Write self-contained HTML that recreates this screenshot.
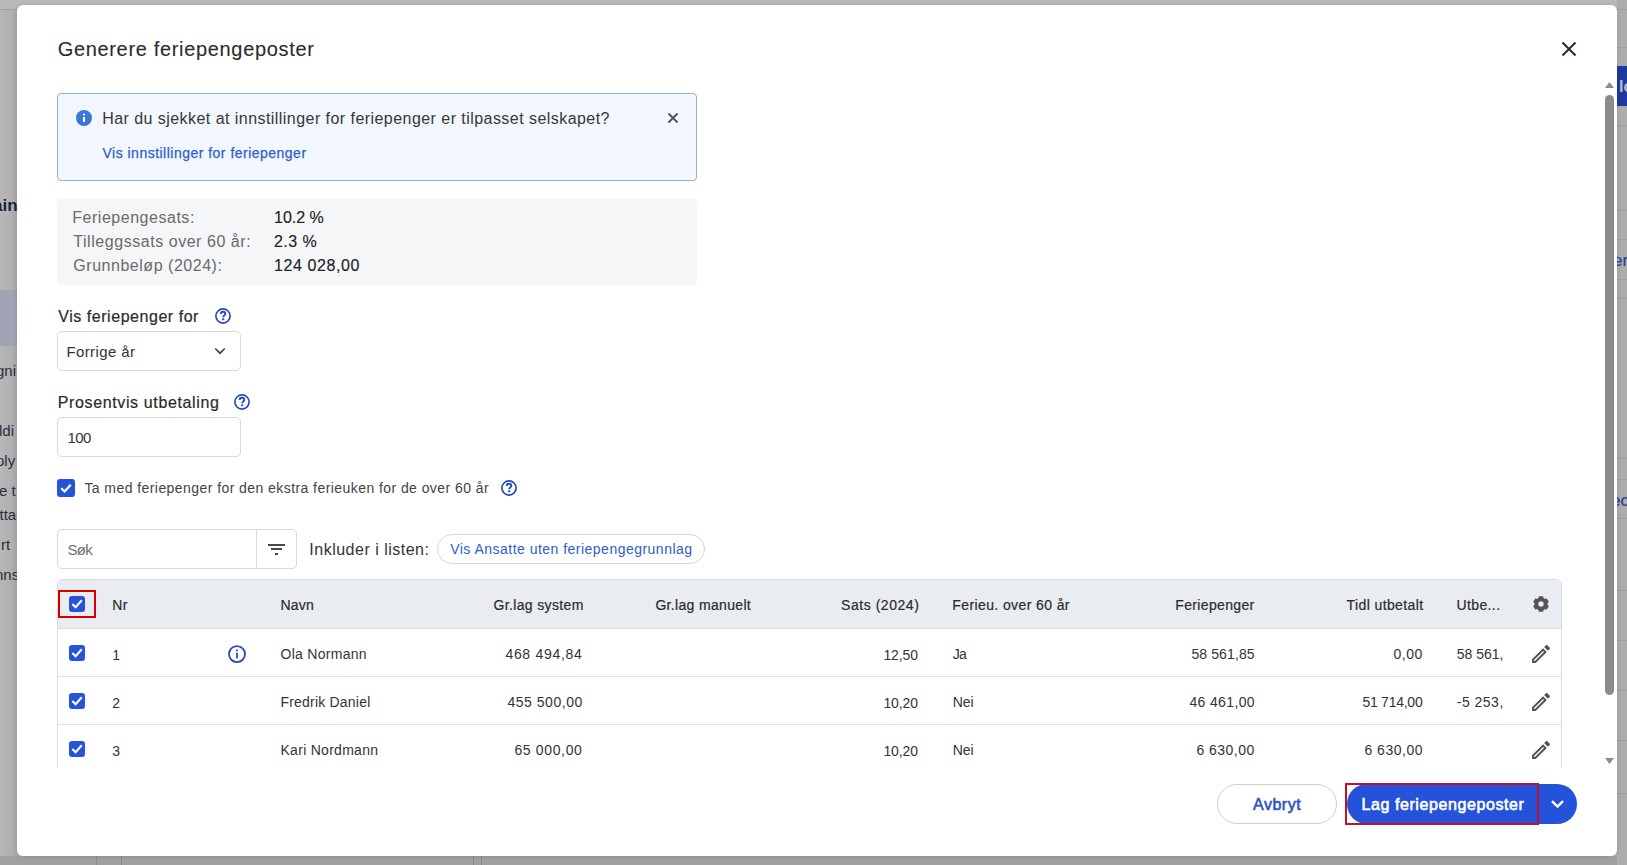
<!DOCTYPE html>
<html><head><meta charset="utf-8">
<style>
*{box-sizing:border-box}
html,body{margin:0;padding:0}
body{width:1627px;height:865px;overflow:hidden;position:relative;background:#b1b1b1;font-family:"Liberation Sans",sans-serif}
.abs{position:absolute}
.tx{position:absolute;white-space:nowrap}
#modal{position:absolute;left:17px;top:5px;width:1600px;height:851px;background:#fff;border-radius:6px;box-shadow:0 0 5px rgba(0,0,0,0.12)}
.ln{position:absolute;background:#a0a0a0}
</style></head>
<body>
<!-- background app (dimmed) -->
<div class="abs" style="left:0;top:0;width:1627px;height:9px;background:#b9b9b9"></div>
<div class="abs" style="left:0;top:10px;width:17px;height:846px;background:linear-gradient(to right,#b7b7b7,#b1b1b1 60%,#a9a9a9)"></div>
<div class="ln" style="left:0;top:9px;width:17px;height:1px"></div>
<div class="abs" style="left:0;top:290px;width:17px;height:56px;background:#a0a3b4"></div>
<div class="abs" style="left:0;top:856px;width:1627px;height:9px;background:#a0a0a0"></div>
<div class="ln" style="left:96px;top:856px;width:1px;height:9px;background:#8a8a8a"></div>
<div class="ln" style="left:121px;top:856px;width:1px;height:9px;background:#8a8a8a"></div>
<div class="ln" style="left:473px;top:856px;width:1px;height:9px;background:#8a8a8a"></div>
<div class="ln" style="left:481px;top:856px;width:1px;height:9px;background:#8a8a8a"></div>
<div class="abs" style="left:1617px;top:0;width:10px;height:865px;background:#adadad"></div>
<div class="ln" style="left:1617px;top:9px;width:10px;height:1px"></div>
<div class="ln" style="left:1617px;top:47px;width:10px;height:1px"></div>
<div class="abs" style="left:1617px;top:66px;width:10px;height:40px;background:#1d3a9e"></div>
<div class="ln" style="left:1617px;top:125px;width:10px;height:1px"></div>
<div class="ln" style="left:1617px;top:210px;width:10px;height:1px"></div>
<div class="ln" style="left:1617px;top:239px;width:10px;height:1px"></div>
<div class="ln" style="left:1617px;top:279px;width:10px;height:1px"></div>
<div class="ln" style="left:1617px;top:298px;width:10px;height:1px"></div>
<div class="ln" style="left:1617px;top:458px;width:10px;height:1px"></div>
<div class="ln" style="left:1617px;top:479px;width:10px;height:1px"></div>
<div class="ln" style="left:1617px;top:518px;width:10px;height:1px"></div>
<div class="ln" style="left:1617px;top:590px;width:10px;height:1px"></div>
<div class="ln" style="left:1617px;top:640px;width:10px;height:1px"></div>
<div class="ln" style="left:1617px;top:690px;width:10px;height:1px"></div>
<div class="ln" style="left:1617px;top:740px;width:10px;height:1px"></div>
<div class="ln" style="left:1617px;top:793px;width:10px;height:1px"></div>
<div class="tx" style="left:1619px;top:79px;font-size:16px;line-height:16px;font-weight:700;color:#b9bfd4">lo</div>
<div class="tx" style="left:1613px;top:252px;font-size:17px;line-height:17px;color:#2a409a;-webkit-text-stroke:0.2px #2a409a">er</div>
<div class="tx" style="left:1611px;top:492px;font-size:17px;line-height:17px;color:#2a409a;-webkit-text-stroke:0.2px #2a409a">ec</div>
<div class="tx" style="left:-7px;top:197px;font-size:17px;line-height:17px;font-weight:700;color:#1a2440">ain</div>
<div class="tx" style="left:-4px;top:363px;font-size:15px;line-height:15px;color:#2b2f3a">gni</div>
<div class="tx" style="left:-1px;top:423px;font-size:15px;line-height:15px;color:#2b2f3a">ldi</div>
<div class="tx" style="left:-4px;top:453px;font-size:15px;line-height:15px;color:#2b2f3a">ply</div>
<div class="tx" style="left:-1px;top:483px;font-size:15px;line-height:15px;color:#2b2f3a">e t</div>
<div class="tx" style="left:-0.5px;top:507px;font-size:15px;line-height:15px;color:#2b2f3a">tta</div>
<div class="tx" style="left:1px;top:537px;font-size:15px;line-height:15px;color:#2b2f3a">rt</div>
<div class="tx" style="left:-5px;top:567px;font-size:15px;line-height:15px;color:#2b2f3a">nns</div>

<div id="modal"></div>

<!-- close X -->
<svg class="abs" style="left:1561px;top:41px" width="16" height="16" viewBox="0 0 16 16"><path d="M1.5 1.5L14.5 14.5M14.5 1.5L1.5 14.5" stroke="#2a2a2a" stroke-width="2" fill="none"/></svg>

<!-- info box -->
<div class="abs" style="left:57px;top:93px;width:640px;height:88px;background:#f2f6fd;border:1px solid #93afd9;border-radius:4px"></div>
<svg class="abs" style="left:76px;top:110px" width="16" height="16" viewBox="0 0 16 16"><circle cx="8" cy="8" r="8" fill="#3b77d6"/><rect x="7" y="7" width="2" height="5" fill="#fff"/><circle cx="8" cy="4.6" r="1.1" fill="#fff"/></svg>
<svg class="abs" style="left:667px;top:112px" width="12" height="12" viewBox="0 0 12 12"><path d="M2 2L10 10M10 2L2 10" stroke="#4d5257" stroke-width="1.8" stroke-linecap="round" fill="none"/></svg>

<!-- stats box -->
<div class="abs" style="left:57px;top:199px;width:640px;height:86px;background:#f5f6f8;border-radius:4px"></div>

<!-- help icons -->
<svg class="abs" style="left:215px;top:308px" width="16" height="16" viewBox="0 0 16 16"><circle cx="8" cy="8" r="7.1" stroke="#2649bb" stroke-width="1.7" fill="none"/><path d="M5.7 6.1C5.7 4.6 6.8 3.7 8 3.7C9.3 3.7 10.3 4.6 10.3 5.8C10.3 7.3 8.2 7.5 8.2 9.3" stroke="#2649bb" stroke-width="1.9" fill="none"/><rect x="7.2" y="10.3" width="2" height="1.9" fill="#2649bb"/></svg>
<svg class="abs" style="left:234px;top:394px" width="16" height="16" viewBox="0 0 16 16"><circle cx="8" cy="8" r="7.1" stroke="#2649bb" stroke-width="1.7" fill="none"/><path d="M5.7 6.1C5.7 4.6 6.8 3.7 8 3.7C9.3 3.7 10.3 4.6 10.3 5.8C10.3 7.3 8.2 7.5 8.2 9.3" stroke="#2649bb" stroke-width="1.9" fill="none"/><rect x="7.2" y="10.3" width="2" height="1.9" fill="#2649bb"/></svg>
<svg class="abs" style="left:501px;top:480px" width="16" height="16" viewBox="0 0 16 16"><circle cx="8" cy="8" r="7.1" stroke="#2649bb" stroke-width="1.7" fill="none"/><path d="M5.7 6.1C5.7 4.6 6.8 3.7 8 3.7C9.3 3.7 10.3 4.6 10.3 5.8C10.3 7.3 8.2 7.5 8.2 9.3" stroke="#2649bb" stroke-width="1.9" fill="none"/><rect x="7.2" y="10.3" width="2" height="1.9" fill="#2649bb"/></svg>

<!-- select -->
<div class="abs" style="left:57px;top:331px;width:184px;height:40px;border:1px solid #d9d9d9;border-radius:5px"></div>
<svg class="abs" style="left:214px;top:346px" width="12" height="10" viewBox="0 0 12 10"><path d="M1.2 2.5L6 7.2L10.8 2.5" stroke="#444" stroke-width="1.7" fill="none"/></svg>
<!-- input -->
<div class="abs" style="left:57px;top:417px;width:184px;height:40px;border:1px solid #d9d9d9;border-radius:5px"></div>

<!-- checkbox -->
<div class="abs" style="left:57px;top:479px;width:18px;height:18px;background:#2553d9;border-radius:3px"></div>
<svg class="abs" style="left:57px;top:479px" width="18" height="18" viewBox="0 0 18 18"><path d="M4.2 9.2L7.6 12.4L13.8 5.8" stroke="#fff" stroke-width="2.2" fill="none"/></svg>

<!-- search -->
<div class="abs" style="left:57px;top:529px;width:240px;height:40px;border:1px solid #d9d9d9;border-radius:5px"></div>
<div class="abs" style="left:256px;top:530px;width:1px;height:38px;background:#d9d9d9"></div>
<div class="abs" style="left:268px;top:543.5px;width:16.5px;height:2px;background:#4a4a4a"></div>
<div class="abs" style="left:271px;top:548px;width:11px;height:2px;background:#4a4a4a"></div>
<div class="abs" style="left:275px;top:553px;width:3.2px;height:2px;background:#4a4a4a"></div>
<!-- pill -->
<div class="abs" style="left:437px;top:534px;width:268px;height:30px;border:1px solid #d6d6d6;border-radius:15px"></div>

<!-- table -->
<div class="abs" style="left:57px;top:579px;width:1505px;height:200px;border:1px solid #d9dbdf;border-bottom:none;border-radius:6px 6px 0 0;overflow:hidden">
  <div class="abs" style="left:0;top:0;width:1503px;height:49px;background:#e9ecf1;border-bottom:1px solid #d8dce3"></div>
  <div class="abs" style="left:0;top:96px;width:1503px;height:1px;background:#dfe2e7"></div>
  <div class="abs" style="left:0;top:144px;width:1503px;height:1px;background:#dfe2e7"></div>
</div>
<!-- clip below table -->
<div class="abs" style="left:40px;top:768px;width:1540px;height:80px;background:#fff"></div>

<!-- red box header -->
<div class="abs" style="left:58px;top:590px;width:38px;height:28px;border:2px solid #d40000"></div>
<!-- checkboxes in table -->
<svg class="abs" style="left:69px;top:596px" width="16" height="16" viewBox="0 0 16 16"><rect x="0" y="0" width="16" height="16" rx="3" fill="#2553d9"/><path d="M3.3 8L6.6 11.2L12.8 4.3" stroke="#fff" stroke-width="2.1" fill="none"/></svg>
<svg class="abs" style="left:69px;top:645px" width="16" height="16" viewBox="0 0 16 16"><rect x="0" y="0" width="16" height="16" rx="3" fill="#2553d9"/><path d="M3.3 8L6.6 11.2L12.8 4.3" stroke="#fff" stroke-width="2.1" fill="none"/></svg>
<svg class="abs" style="left:69px;top:693px" width="16" height="16" viewBox="0 0 16 16"><rect x="0" y="0" width="16" height="16" rx="3" fill="#2553d9"/><path d="M3.3 8L6.6 11.2L12.8 4.3" stroke="#fff" stroke-width="2.1" fill="none"/></svg>
<svg class="abs" style="left:69px;top:741px" width="16" height="16" viewBox="0 0 16 16"><rect x="0" y="0" width="16" height="16" rx="3" fill="#2553d9"/><path d="M3.3 8L6.6 11.2L12.8 4.3" stroke="#fff" stroke-width="2.1" fill="none"/></svg>


<!-- info icon row 1 -->
<svg class="abs" style="left:228px;top:645px" width="18" height="18" viewBox="0 0 18 18"><circle cx="9" cy="9.1" r="8" stroke="#2649bb" stroke-width="1.8" fill="none"/><rect x="8.1" y="7.7" width="1.8" height="5.7" fill="#2649bb"/><rect x="8.1" y="4.5" width="1.8" height="1.7" fill="#2649bb"/></svg>

<!-- gear -->
<svg class="abs" style="left:1529px;top:592px" width="24" height="24" viewBox="0 0 24 24"><circle cx="12" cy="12" r="6.6" fill="#555"/><rect x="4.2" y="9.7" width="15.6" height="4.6" rx="0.6" fill="#555" transform="rotate(90 12 12)"/><rect x="4.2" y="9.7" width="15.6" height="4.6" rx="0.6" fill="#555" transform="rotate(30 12 12)"/><rect x="4.2" y="9.7" width="15.6" height="4.6" rx="0.6" fill="#555" transform="rotate(150 12 12)"/><circle cx="12" cy="12" r="2.7" fill="#e9ecf1"/></svg>
<!-- pencils -->
<svg class="abs" style="left:1529px;top:642px" width="24" height="24" viewBox="0 0 24 24"><path fill="#555" d="M3 17.25V21h3.75L17.81 9.94l-3.75-3.75L3 17.25zM5.92 19H5v-.92l9.06-9.06.92.92L5.92 19zM20.71 5.63l-2.34-2.34c-.2-.2-.45-.29-.71-.29s-.51.1-.7.29l-1.83 1.83 3.75 3.75 1.83-1.83c.39-.39.39-1.02 0-1.41z"/></svg>
<svg class="abs" style="left:1529px;top:690px" width="24" height="24" viewBox="0 0 24 24"><path fill="#555" d="M3 17.25V21h3.75L17.81 9.94l-3.75-3.75L3 17.25zM5.92 19H5v-.92l9.06-9.06.92.92L5.92 19zM20.71 5.63l-2.34-2.34c-.2-.2-.45-.29-.71-.29s-.51.1-.7.29l-1.83 1.83 3.75 3.75 1.83-1.83c.39-.39.39-1.02 0-1.41z"/></svg>
<svg class="abs" style="left:1529px;top:738px" width="24" height="24" viewBox="0 0 24 24"><path fill="#555" d="M3 17.25V21h3.75L17.81 9.94l-3.75-3.75L3 17.25zM5.92 19H5v-.92l9.06-9.06.92.92L5.92 19zM20.71 5.63l-2.34-2.34c-.2-.2-.45-.29-.71-.29s-.51.1-.7.29l-1.83 1.83 3.75 3.75 1.83-1.83c.39-.39.39-1.02 0-1.41z"/></svg>
<!-- scrollbar -->
<svg class="abs" style="left:1604px;top:81px" width="11" height="8" viewBox="0 0 11 8"><path d="M5.5 1L10 7H1z" fill="#8c8c8c"/></svg>
<div class="abs" style="left:1605px;top:95px;width:9px;height:600px;background:#8c8c8c;border-radius:4.5px"></div>
<svg class="abs" style="left:1604px;top:757px" width="11" height="8" viewBox="0 0 11 8"><path d="M1 1H10L5.5 7z" fill="#8c8c8c"/></svg>

<!-- buttons -->
<div class="abs" style="left:1217px;top:784px;width:120px;height:40px;border:1px solid #cfcfcf;border-radius:20px;background:#fff"></div>
<div class="abs" style="left:1347px;top:784px;width:230px;height:40px;background:#2452db;border-radius:20px"></div>
<svg class="abs" style="left:1550px;top:798px" width="15" height="12" viewBox="0 0 15 12"><path d="M2 3.2L7.5 8.6L13 3.2" stroke="#fff" stroke-width="2.4" fill="none"/></svg>
<div class="abs" style="left:1345px;top:783px;width:194px;height:42px;border:2px solid #bf1428"></div>

<div class="tx" style="left:57.70px;top:39.00px;font-size:20px;line-height:20px;font-weight:400;color:#2b2b2b;letter-spacing:0.667px;-webkit-text-stroke:0.1px #2b2b2b;">Generere feriepengeposter</div>
<div class="tx" style="left:102.20px;top:111.00px;font-size:16px;line-height:16px;font-weight:400;color:#383838;letter-spacing:0.450px;">Har du sjekket at innstillinger for feriepenger er tilpasset selskapet?</div>
<div class="tx" style="left:102.50px;top:146.00px;font-size:14px;line-height:14px;font-weight:400;color:#2f5ec9;letter-spacing:0.484px;-webkit-text-stroke:0.25px #2f5ec9;">Vis innstillinger for feriepenger</div>
<div class="tx" style="left:72.30px;top:210.00px;font-size:16px;line-height:16px;font-weight:400;color:#6a6a6a;letter-spacing:0.521px;">Feriepengesats:</div>
<div class="tx" style="left:73.30px;top:234.00px;font-size:16px;line-height:16px;font-weight:400;color:#6a6a6a;letter-spacing:0.543px;">Tilleggssats over 60 år:</div>
<div class="tx" style="left:73.30px;top:258.00px;font-size:16px;line-height:16px;font-weight:400;color:#6a6a6a;letter-spacing:0.529px;">Grunnbeløp (2024):</div>
<div class="tx" style="left:274.00px;top:210.00px;font-size:16px;line-height:16px;font-weight:400;color:#222;letter-spacing:0.000px;-webkit-text-stroke:0.15px #222;">10.2 %</div>
<div class="tx" style="left:274.00px;top:234.00px;font-size:16px;line-height:16px;font-weight:400;color:#222;letter-spacing:0.425px;-webkit-text-stroke:0.15px #222;">2.3 %</div>
<div class="tx" style="left:274.00px;top:258.00px;font-size:16px;line-height:16px;font-weight:400;color:#222;letter-spacing:0.589px;-webkit-text-stroke:0.15px #222;">124 028,00</div>
<div class="tx" style="left:58.30px;top:309.00px;font-size:16px;line-height:16px;font-weight:400;color:#2b2b2b;letter-spacing:0.539px;-webkit-text-stroke:0.2px #2b2b2b;">Vis feriepenger for</div>
<div class="tx" style="left:66.40px;top:344.00px;font-size:15px;line-height:15px;font-weight:400;color:#333;letter-spacing:0.400px;">Forrige år</div>
<div class="tx" style="left:57.70px;top:395.00px;font-size:16px;line-height:16px;font-weight:400;color:#2b2b2b;letter-spacing:0.635px;-webkit-text-stroke:0.2px #2b2b2b;">Prosentvis utbetaling</div>
<div class="tx" style="left:67.40px;top:430.00px;font-size:15px;line-height:15px;font-weight:400;color:#333;letter-spacing:-0.500px;">100</div>
<div class="tx" style="left:84.40px;top:481.00px;font-size:14px;line-height:14px;font-weight:400;color:#444;letter-spacing:0.433px;">Ta med feriepenger for den ekstra ferieuken for de over 60 år</div>
<div class="tx" style="left:67.60px;top:542.00px;font-size:15px;line-height:15px;font-weight:400;color:#6e6e6e;letter-spacing:-0.750px;">Søk</div>
<div class="tx" style="left:309.30px;top:542.00px;font-size:16px;line-height:16px;font-weight:400;color:#333;letter-spacing:0.500px;">Inkluder i listen:</div>
<div class="tx" style="left:450.20px;top:541.80px;font-size:14px;line-height:14px;font-weight:400;color:#2f5ec9;letter-spacing:0.482px;">Vis Ansatte uten feriepengegrunnlag</div>
<div class="tx" style="left:112.20px;top:598.20px;font-size:14px;line-height:14px;font-weight:400;color:#2b2b2b;letter-spacing:0.400px;-webkit-text-stroke:0.2px #2b2b2b;">Nr</div>
<div class="tx" style="left:280.50px;top:598.20px;font-size:14px;line-height:14px;font-weight:400;color:#2b2b2b;letter-spacing:0.233px;-webkit-text-stroke:0.2px #2b2b2b;">Navn</div>
<div class="tx" style="left:493.40px;top:598.20px;font-size:14px;line-height:14px;font-weight:400;color:#2b2b2b;letter-spacing:0.367px;-webkit-text-stroke:0.2px #2b2b2b;">Gr.lag system</div>
<div class="tx" style="left:655.40px;top:598.20px;font-size:14px;line-height:14px;font-weight:400;color:#2b2b2b;letter-spacing:0.331px;-webkit-text-stroke:0.2px #2b2b2b;">Gr.lag manuelt</div>
<div class="tx" style="left:841.00px;top:598.20px;font-size:14px;line-height:14px;font-weight:400;color:#2b2b2b;letter-spacing:0.550px;-webkit-text-stroke:0.2px #2b2b2b;">Sats (2024)</div>
<div class="tx" style="left:952.30px;top:598.20px;font-size:14px;line-height:14px;font-weight:400;color:#2b2b2b;letter-spacing:0.394px;-webkit-text-stroke:0.2px #2b2b2b;">Ferieu. over 60 år</div>
<div class="tx" style="left:1175.30px;top:598.20px;font-size:14px;line-height:14px;font-weight:400;color:#2b2b2b;letter-spacing:0.350px;-webkit-text-stroke:0.2px #2b2b2b;">Feriepenger</div>
<div class="tx" style="left:1346.60px;top:598.20px;font-size:14px;line-height:14px;font-weight:400;color:#2b2b2b;letter-spacing:0.392px;-webkit-text-stroke:0.2px #2b2b2b;">Tidl utbetalt</div>
<div class="tx" style="left:1456.40px;top:598.20px;font-size:14px;line-height:14px;font-weight:400;color:#2b2b2b;letter-spacing:0.400px;-webkit-text-stroke:0.2px #2b2b2b;">Utbe...</div>
<div class="tx" style="left:112.20px;top:647.60px;font-size:14px;line-height:14px;font-weight:400;color:#333;letter-spacing:0.000px;">1</div>
<div class="tx" style="left:280.50px;top:646.90px;font-size:14px;line-height:14px;font-weight:400;color:#333;letter-spacing:0.280px;">Ola Normann</div>
<div class="tx" style="left:505.40px;top:646.90px;font-size:14px;line-height:14px;font-weight:400;color:#333;letter-spacing:0.700px;">468 494,84</div>
<div class="tx" style="left:883.40px;top:647.70px;font-size:14px;line-height:14px;font-weight:400;color:#333;letter-spacing:-0.100px;">12,50</div>
<div class="tx" style="left:952.70px;top:647.20px;font-size:14px;line-height:14px;font-weight:400;color:#333;letter-spacing:-0.800px;">Ja</div>
<div class="tx" style="left:1191.40px;top:646.90px;font-size:14px;line-height:14px;font-weight:400;color:#333;letter-spacing:0.112px;">58 561,85</div>
<div class="tx" style="left:1393.40px;top:646.90px;font-size:14px;line-height:14px;font-weight:400;color:#333;letter-spacing:0.567px;">0,00</div>
<div class="tx" style="left:1456.80px;top:646.90px;font-size:14px;line-height:14px;font-weight:400;color:#333;letter-spacing:-0.033px;">58 561,</div>
<div class="tx" style="left:112.20px;top:695.60px;font-size:14px;line-height:14px;font-weight:400;color:#333;letter-spacing:0.000px;">2</div>
<div class="tx" style="left:280.50px;top:694.90px;font-size:14px;line-height:14px;font-weight:400;color:#333;letter-spacing:0.200px;">Fredrik Daniel</div>
<div class="tx" style="left:507.40px;top:694.90px;font-size:14px;line-height:14px;font-weight:400;color:#333;letter-spacing:0.533px;">455 500,00</div>
<div class="tx" style="left:883.40px;top:695.70px;font-size:14px;line-height:14px;font-weight:400;color:#333;letter-spacing:-0.100px;">10,20</div>
<div class="tx" style="left:952.70px;top:695.20px;font-size:14px;line-height:14px;font-weight:400;color:#333;letter-spacing:0.000px;">Nei</div>
<div class="tx" style="left:1189.40px;top:694.90px;font-size:14px;line-height:14px;font-weight:400;color:#333;letter-spacing:0.363px;">46 461,00</div>
<div class="tx" style="left:1362.40px;top:694.90px;font-size:14px;line-height:14px;font-weight:400;color:#333;letter-spacing:-0.250px;">51 714,00</div>
<div class="tx" style="left:1456.80px;top:694.90px;font-size:14px;line-height:14px;font-weight:400;color:#333;letter-spacing:0.483px;">-5 253,</div>
<div class="tx" style="left:112.20px;top:743.60px;font-size:14px;line-height:14px;font-weight:400;color:#333;letter-spacing:0.000px;">3</div>
<div class="tx" style="left:280.50px;top:742.90px;font-size:14px;line-height:14px;font-weight:400;color:#333;letter-spacing:0.283px;">Kari Nordmann</div>
<div class="tx" style="left:514.40px;top:742.90px;font-size:14px;line-height:14px;font-weight:400;color:#333;letter-spacing:0.650px;">65 000,00</div>
<div class="tx" style="left:883.40px;top:743.70px;font-size:14px;line-height:14px;font-weight:400;color:#333;letter-spacing:-0.100px;">10,20</div>
<div class="tx" style="left:952.70px;top:743.20px;font-size:14px;line-height:14px;font-weight:400;color:#333;letter-spacing:0.000px;">Nei</div>
<div class="tx" style="left:1196.40px;top:742.90px;font-size:14px;line-height:14px;font-weight:400;color:#333;letter-spacing:0.486px;">6 630,00</div>
<div class="tx" style="left:1364.40px;top:742.90px;font-size:14px;line-height:14px;font-weight:400;color:#333;letter-spacing:0.514px;">6 630,00</div>
<div class="tx" style="left:1253.00px;top:797.00px;font-size:16px;line-height:16px;font-weight:400;color:#2b55c8;letter-spacing:0.520px;-webkit-text-stroke:0.6px #2b55c8;">Avbryt</div>
<div class="tx" style="left:1361.40px;top:797.00px;font-size:16px;line-height:16px;font-weight:400;color:#fff;letter-spacing:0.595px;-webkit-text-stroke:0.6px #fff;">Lag feriepengeposter</div>
</body></html>
